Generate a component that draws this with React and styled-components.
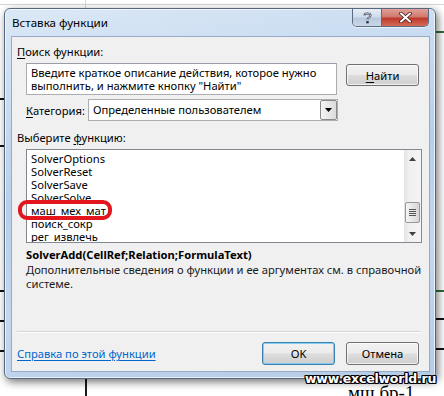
import React from "react";
import styled, { createGlobalStyle } from "styled-components";

const GlobalStyle = createGlobalStyle`
  html, body {
    margin: 0;
    padding: 0;
  }
  body {
    font-family: "Noto Sans", "Segoe UI", sans-serif;
    font-size: 11.2px;
    color: #000;
  }
`;

const Desktop = styled.div`
  position: relative;
  width: 444px;
  height: 396px;
  overflow: hidden;
  background-color: #fff;
  background-repeat: no-repeat;
  background-image:
    linear-gradient(#1a1a1a, #1a1a1a),
    linear-gradient(#d6d6d6, #d6d6d6),
    linear-gradient(#d6d6d6, #d6d6d6),
    linear-gradient(#111, #111),
    linear-gradient(#111, #111),
    linear-gradient(#111, #111),
    linear-gradient(#111, #111),
    linear-gradient(#111, #111),
    linear-gradient(#2f6f3a, #2f6f3a),
    linear-gradient(#2f6f3a, #2f6f3a),
    linear-gradient(#111, #111),
    linear-gradient(#111, #111);
  background-size:
    2px 20px,
    1px 10px,
    100% 1px,
    6px 2px,
    6px 2px,
    6px 2px,
    6px 2px,
    6px 2px,
    10px 2px,
    10px 2px,
    10px 2px,
    10px 2px;
  background-position:
    85px 378px,
    85px 0,
    0 4px,
    0 98px,
    0 145px,
    0 290px,
    0 320px,
    0 350px,
    436px 31px,
    436px 290px,
    436px 318px,
    436px 348px;
`;

const Window = styled.div`
  margin: 8px 0 0 4px;
  width: 432px;
  height: 371px;
  box-sizing: border-box;
  border: 1px solid #56677f;
  border-radius: 6px;
  padding: 0 5px 6px 6px;
  display: flex;
  flex-direction: column;
  background: linear-gradient(
    170deg,
    #dbe8f6 0%,
    #c6daf0 25%,
    #b7cfeb 45%,
    #c3d7ee 70%,
    #b5cce8 100%
  );
  box-shadow: 2px 3px 9px rgba(0, 0, 0, 0.55),
    inset 0 0 0 1px rgba(255, 255, 255, 0.65);
`;

const TitleBar = styled.div`
  height: 27px;
  display: flex;
  align-items: flex-start;
  justify-content: space-between;
  padding-left: 1px;
`;

const Title = styled.div`
  margin-top: 6px;
  line-height: 15px;
  font-size: 11.6px;
  color: #000;
`;

const CaptionGroup = styled.div`
  display: flex;
  margin-right: 1px;
  border: 1px solid #5b6b82;
  border-top: none;
  border-radius: 0 0 5px 5px;
  overflow: hidden;
  box-shadow: 0 1px 0 rgba(255, 255, 255, 0.6);
`;

const CaptionButton = styled.div`
  width: ${(p) => p.$w}px;
  height: 17px;
  display: flex;
  align-items: center;
  justify-content: center;
  background: ${(p) =>
    p.$close
      ? "linear-gradient(#e0a199 0%, #d07a6f 45%, #c0392c 55%, #d36b55 100%)"
      : "linear-gradient(#e6eef7 0%, #cfdcec 45%, #b9c9dd 55%, #c9d7e8 100%)"};
  & + & {
    border-left: 1px solid #5b6b82;
  }
`;

const Client = styled.div`
  flex: 1;
  display: flex;
  flex-direction: column;
  background: #f0f0f0;
  border: 1px solid #97abc4;
  padding: 7px 8px 6px 5px;
`;

const Label = styled.div`
  line-height: 15px;
  margin-top: ${(p) => p.$mt || 0}px;
  padding-left: ${(p) => p.$indent || 0}px;
  font-weight: ${(p) => (p.$bold ? 700 : 400)};
  white-space: nowrap;
  color: ${(p) => (p.$dim ? "#1a1a1a" : "#000")};
`;

const Key = styled.span`
  text-decoration: underline;
  text-underline-offset: 2px;
`;

const Row = styled.div`
  display: flex;
  align-items: ${(p) => p.$align || "center"};
  margin-top: 4px;
  padding-left: 9px;
  padding-right: 2px;
`;

const SearchBox = styled.div`
  width: 312px;
  height: 32px;
  box-sizing: border-box;
  background: #fff;
  border: 1px solid #abadb3;
  border-top-color: #9a9da5;
  padding: 2px 4px;
  line-height: 13px;
  white-space: nowrap;
`;

const Button = styled.div`
  width: 73px;
  height: ${(p) => p.$h || 23}px;
  box-sizing: border-box;
  margin-left: ${(p) => p.$ml || 0}px;
  margin-top: ${(p) => p.$mt || 0}px;
  align-self: flex-start;
  display: flex;
  align-items: center;
  justify-content: center;
  border-radius: 3px;
  border: 1px solid ${(p) => (p.$default ? "#3c7fb1" : "#707070")};
  background: linear-gradient(#f2f2f2 0%, #ebebeb 48%, #dddddd 52%, #cfcfcf 100%);
  box-shadow: inset 0 0 0 1px
    ${(p) => (p.$default ? "rgba(120, 200, 240, 0.9)" : "rgba(255,255,255,0.7)")};
  color: #000;
`;

const CategoryLabel = styled.div`
  width: 62px;
  white-space: nowrap;
`;

const Select = styled.div`
  width: 250px;
  height: 22px;
  box-sizing: border-box;
  display: flex;
  align-items: stretch;
  background: #fff;
  border: 1px solid #abadb3;
`;

const SelectText = styled.div`
  flex: 1;
  padding-left: 4px;
  line-height: 20px;
  white-space: nowrap;
`;

const DropButton = styled.div`
  width: 17px;
  display: flex;
  align-items: center;
  justify-content: center;
  box-sizing: border-box;
  border: 1px solid #8a8a8a;
  border-radius: 2px;
  background: linear-gradient(90deg, #f4f4f4, #dcdcdc);
`;

const ListWrap = styled.div`
  position: relative;
  margin-top: 4px;
  margin-left: 9px;
  width: 396px;
`;

const List = styled.div`
  height: 94px;
  box-sizing: border-box;
  border: 1px solid #828790;
  background: #fff;
  display: flex;
  overflow: hidden;
`;

const Items = styled.div`
  flex: 1;
  padding: 2px 0 0 4px;
`;

const Item = styled.div`
  line-height: 13px;
  height: 13px;
  white-space: nowrap;
`;

const Scrollbar = styled.div`
  width: 17px;
  display: flex;
  flex-direction: column;
  background: linear-gradient(90deg, #e3e3e3, #f0f0f0 30%, #f4f4f4);
`;

const Arrow = styled.div`
  height: 17px;
  display: flex;
  align-items: center;
  justify-content: center;
`;

const Track = styled.div`
  flex: 1;
  display: flex;
  flex-direction: column;
  justify-content: flex-end;
  padding-bottom: 2px;
`;

const Thumb = styled.div`
  margin: 0 1px;
  height: 21px;
  box-sizing: border-box;
  border: 1px solid #979797;
  border-radius: 2px;
  background: linear-gradient(90deg, #f5f5f5, #e6e6e6 50%, #d6d6d6);
  display: flex;
  flex-direction: column;
  align-items: center;
  justify-content: center;
  gap: 1px;
`;

const Grip = styled.div`
  width: 7px;
  height: 1px;
  background: #555;
`;

const Marker = styled.div`
  position: absolute;
  left: -8px;
  top: 51px;
  width: 94px;
  height: 20px;
  box-sizing: border-box;
  border: 4px solid #e3151d;
  border-radius: 9px;
`;

const Spacer = styled.div`
  flex: 1;
`;

const Separator = styled.div`
  border-top: 1px solid #d5d5d5;
  border-bottom: 1px solid #fff;
`;

const Footer = styled.div`
  margin-top: 9px;
  height: 23px;
  display: flex;
  align-items: center;
  padding-right: 2px;
`;

const HelpLink = styled.a`
  color: #0066cc;
  text-decoration: underline;
  text-underline-offset: 2px;
  margin-right: auto;
  cursor: pointer;
`;

const Watermark = styled.div`
  position: absolute;
  left: 305px;
  top: 371px;
  font-family: "DejaVu Sans", sans-serif;
  font-weight: 700;
  font-size: 12.5px;
  letter-spacing: -0.2px;
  color: #fff;
  text-shadow: 1px 0 0 #000, -1px 0 0 #000, 0 1px 0 #000, 0 -1px 0 #000,
    1px 1px 0 #000, -1px -1px 0 #000, 1px -1px 0 #000, -1px 1px 0 #000;
`;

const SheetStrip = styled.div`
  padding: 4px 0 0 348px;
  font-family: "Liberation Serif", serif;
  font-size: 19px;
  line-height: 19px;
  color: #000;
  white-space: nowrap;
`;

const Triangle = ({ up, color = "#404040" }) => (
  <svg width="7" height="4" viewBox="0 0 7 4">
    <polygon points={up ? "0,4 7,4 3.5,0" : "0,0 7,0 3.5,4"} fill={color} />
  </svg>
);

const functions = [
  "SolverOptions",
  "SolverReset",
  "SolverSave",
  "SolverSolve",
  "маш_мех_мат",
  "поиск_сокр",
  "рег_извлечь",
];

const App = () => {
  return (
    <Desktop>
      <GlobalStyle />
      <Window>
        <TitleBar>
          <Title>Вставка функции</Title>
          <CaptionGroup>
            <CaptionButton $w={28}>
              <svg width="9" height="12" viewBox="0 0 9 12">
                <path
                  d="M1.5 3.5 C1.5 1 7.5 0.5 7.5 3.5 C7.5 5.5 4.5 5.5 4.5 7.5"
                  fill="none"
                  stroke="#2b3a4e"
                  strokeWidth="2"
                />
                <path
                  d="M1.5 3.5 C1.5 1 7.5 0.5 7.5 3.5 C7.5 5.5 4.5 5.5 4.5 7.5"
                  fill="none"
                  stroke="#fff"
                  strokeWidth="0.8"
                />
                <rect x="3.3" y="9" width="2.4" height="2.4" fill="#2b3a4e" />
              </svg>
            </CaptionButton>
            <CaptionButton $w={46} $close>
              <svg width="13" height="11" viewBox="0 0 13 11">
                <path
                  d="M2 1.5 L11 9.5 M11 1.5 L2 9.5"
                  stroke="#4a1a16"
                  strokeWidth="3.6"
                  strokeLinecap="round"
                />
                <path
                  d="M2 1.5 L11 9.5 M11 1.5 L2 9.5"
                  stroke="#fff"
                  strokeWidth="2"
                  strokeLinecap="round"
                />
              </svg>
            </CaptionButton>
          </CaptionGroup>
        </TitleBar>
        <Client>
          <Label>
            <Key>П</Key>оиск функции:
          </Label>
          <Row $align="flex-start">
            <SearchBox>
              Введите краткое описание действия, которое нужно
              <br />
              выполнить, и нажмите кнопку "Найти"
            </SearchBox>
            <Button $ml={9} $h={22} $mt={1}>
              <span>
                <Key>Н</Key>айти
              </span>
            </Button>
          </Row>
          <Row>
            <CategoryLabel>
              <Key>К</Key>атегория:
            </CategoryLabel>
            <Select>
              <SelectText>Определенные пользователем</SelectText>
              <DropButton>
                <Triangle color="#000" />
              </DropButton>
            </Select>
          </Row>
          <Label $mt={9}>
            Выберите <Key>ф</Key>ункцию:
          </Label>
          <ListWrap>
            <List>
              <Items>
                {functions.map((f) => (
                  <Item key={f}>{f}</Item>
                ))}
              </Items>
              <Scrollbar>
                <Arrow>
                  <Triangle up />
                </Arrow>
                <Track>
                  <Thumb>
                    <Grip />
                    <Grip />
                    <Grip />
                    <Grip />
                  </Thumb>
                </Track>
                <Arrow>
                  <Triangle />
                </Arrow>
              </Scrollbar>
            </List>
            <Marker />
          </ListWrap>
          <Label $mt={4} $indent={9} $bold>
            SolverAdd(CellRef;Relation;FormulaText)
          </Label>
          <Label $mt={1} $indent={9} $dim style={{ lineHeight: "14px" }}>
            Дополнительные сведения о функции и ее аргументах см. в справочной
            <br />
            системе.
          </Label>
          <Spacer />
          <Separator />
          <Footer>
            <HelpLink>Справка по этой функции</HelpLink>
            <Button $default>OK</Button>
            <Button $ml={11}>Отмена</Button>
          </Footer>
        </Client>
      </Window>
      <SheetStrip>мш бр-1</SheetStrip>
      <Watermark>www.excelworld.ru</Watermark>
    </Desktop>
  );
};

export default App;
